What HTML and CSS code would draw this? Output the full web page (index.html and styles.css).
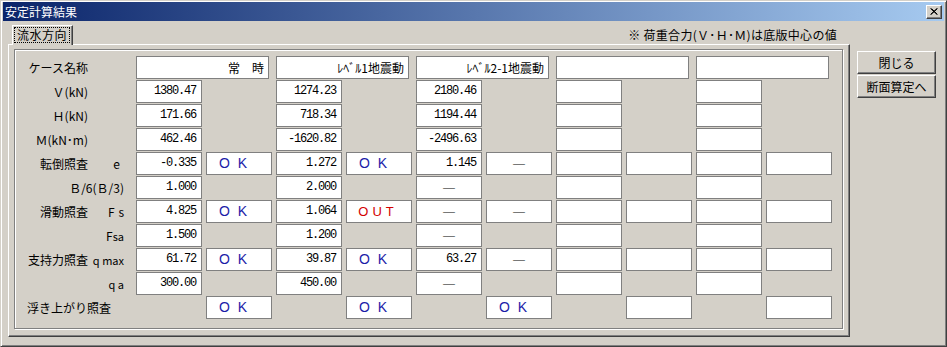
FILE: index.html
```html
<!DOCTYPE html>
<html lang="ja">
<head>
  <meta charset="UTF-8" />
  <title>安定計算結果</title>
  <link rel="stylesheet" href="styles.css">
</head>
<body>

  <div class="window">
    <!-- Title bar -->
    <div class="titlebar">
      <span class="title">安定計算結果</span>
      <span class="close">
        <svg width="8" height="7" viewBox="0 0 8 7"><path d="M0.5 0.5 L7 6.5 M1.5 0.5 L7.5 6.5 M7 0.5 L0.5 6.5 M7.5 0.5 L1 6.5" stroke="#000" stroke-width="1" fill="none"/></svg>
      </span>
    </div>

    <div class="main">
      <div class="tabs">
        <div class="strip">
          <div class="tab"><span class="focus">流水方向</span></div>
          <div class="note">※ 荷重合力(Ｖ･Ｈ･Ｍ)は底版中心の値</div>
        </div>

        <div class="page">
          <div class="group">
            <div class="grid">
              <!-- case names -->
              <div class="lb"><span class="m">ケース名称</span></div>
              <div class="c hd">常　時</div>
              <div class="c hd">ﾚﾍﾞﾙ1地震動</div>
              <div class="c hd">ﾚﾍﾞﾙ2-1地震動</div>
              <div class="c hd"></div>
              <div class="c hd"></div>

              <!-- V -->
              <div class="lb"><span class="m">Ｖ(kN)</span></div>
              <div class="c n">1380.47</div><div></div>
              <div class="c n">1274.23</div><div></div>
              <div class="c n">2180.46</div><div></div>
              <div class="c"></div><div></div>
              <div class="c"></div><div></div>

              <!-- H -->
              <div class="lb"><span class="m">Ｈ(kN)</span></div>
              <div class="c n">171.66</div><div></div>
              <div class="c n">718.34</div><div></div>
              <div class="c n">1194.44</div><div></div>
              <div class="c"></div><div></div>
              <div class="c"></div><div></div>

              <!-- M -->
              <div class="lb"><span class="m">Ｍ(kN･m)</span></div>
              <div class="c n">462.46</div><div></div>
              <div class="c n">-1620.82</div><div></div>
              <div class="c n">-2496.63</div><div></div>
              <div class="c"></div><div></div>
              <div class="c"></div><div></div>

              <!-- overturning -->
              <div class="lb"><span class="m">転倒照査</span><span class="s e">e</span></div>
              <div class="c n">-0.335</div><div class="c ok">OK</div>
              <div class="c n">1.272</div><div class="c ok">OK</div>
              <div class="c n">1.145</div><div class="c d">―</div>
              <div class="c"></div><div class="c"></div>
              <div class="c"></div><div class="c"></div>

              <div class="lb"><span class="s">Ｂ/6(Ｂ/3)</span></div>
              <div class="c n">1.000</div><div></div>
              <div class="c n">2.000</div><div></div>
              <div class="c d">―</div><div></div>
              <div class="c"></div><div></div>
              <div class="c"></div><div></div>

              <!-- sliding -->
              <div class="lb"><span class="m">滑動照査</span><span class="s wide">Fs</span></div>
              <div class="c n">4.825</div><div class="c ok">OK</div>
              <div class="c n">1.064</div><div class="c ok out">OUT</div>
              <div class="c d">―</div><div class="c d">―</div>
              <div class="c"></div><div class="c"></div>
              <div class="c"></div><div class="c"></div>

              <div class="lb"><span class="s">F<small>sa</small></span></div>
              <div class="c n">1.500</div><div></div>
              <div class="c n">1.200</div><div></div>
              <div class="c d">―</div><div></div>
              <div class="c"></div><div></div>
              <div class="c"></div><div></div>

              <!-- bearing -->
              <div class="lb"><span class="m">支持力照査</span><span class="s"><small>q max</small></span></div>
              <div class="c n">61.72</div><div class="c ok">OK</div>
              <div class="c n">39.87</div><div class="c ok">OK</div>
              <div class="c n">63.27</div><div class="c d">―</div>
              <div class="c"></div><div class="c"></div>
              <div class="c"></div><div class="c"></div>

              <div class="lb"><span class="s"><small>q a</small></span></div>
              <div class="c n">300.00</div><div></div>
              <div class="c n">450.00</div><div></div>
              <div class="c d">―</div><div></div>
              <div class="c"></div><div></div>
              <div class="c"></div><div></div>

              <!-- uplift -->
              <div class="lb float">浮き上がり照査</div>
              <div></div><div class="c ok">OK</div>
              <div></div><div class="c ok">OK</div>
              <div></div><div class="c ok">OK</div>
              <div></div><div class="c"></div>
              <div></div><div class="c"></div>
            </div>
          </div>
        </div>
      </div>

      <div class="side">
        <button>閉じる</button>
        <button>断面算定へ</button>
      </div>
    </div>
  </div>

</body>
</html>
```

FILE: styles.css
```css
* { box-sizing: border-box; }

body {
  margin: 0;
  background: #d4d0c8;
  font-family: "Noto Sans CJK JP", sans-serif;
  font-size: 12px;
  color: #000;
}

.window {
  width: 947px;
  height: 347px;
  background: #d4d0c8;
  border: 1px solid;
  border-color: #d4d0c8 #404040 #404040 #d4d0c8;
  box-shadow: inset 1px 1px #fff, inset -1px -1px #808080;
  padding: 1px 2px 2px 2px;
}

.titlebar {
  height: 19px;
  background: linear-gradient(to right, #0a246a, #a6caf0);
  color: #fff;
  display: flex;
  align-items: center;
  justify-content: space-between;
  padding: 0 2px 0 2px;
}

.title { line-height: 19px; font-size: 12px; }

.close {
  width: 16px;
  height: 14px;
  background: #d4d0c8;
  border: 1px solid;
  border-color: #fff #404040 #404040 #fff;
  box-shadow: inset -1px -1px #808080;
  display: flex;
  align-items: center;
  justify-content: center;
}

.main {
  display: flex;
  padding: 4px 0 0 5px;
}

.tabs { width: 842px; }

.strip {
  height: 19px;
  display: flex;
  align-items: flex-end;
  justify-content: space-between;
}

.tab {
  position: relative;
  z-index: 1;
  margin-left: 4px;
  margin-bottom: -1px;
  width: 61px;
  height: 20px;
  background: #d4d0c8;
  border: 1px solid;
  border-bottom: none;
  border-color: #fff #404040 transparent #fff;
  box-shadow: inset -1px 0 #808080;
  padding: 2px 3px 0 2px;
}

.focus {
  display: block;
  outline: 1px dotted #000;
  line-height: 14px;
  padding-left: 2px;
  letter-spacing: 0.5px;
}

.note {
  padding-right: 13px;
  line-height: 19px;
  letter-spacing: 0.3px;
}

.page {
  height: 293px;
  border: 1px solid;
  border-color: #fff #404040 #404040 #fff;
  box-shadow: inset -1px -1px #808080;
  padding: 4px 6px 0 5px;
}

.group {
  height: 280px;
  border: 1px solid #808080;
  box-shadow: inset 1px 1px #fff, 1px 1px #fff;
  padding-top: 6px;
}

.grid {
  display: grid;
  grid-template-columns: 117px repeat(10, 66px);
  grid-auto-rows: 23px;
  column-gap: 4px;
  row-gap: 1px;
}

.lb {
  display: flex;
  align-items: center;
  white-space: nowrap;
}

.lb .m { width: 73px; flex: none; text-align: right; }
.lb .s { flex: 1; text-align: right; padding-right: 8px; }
.lb .e { padding-right: 12px; }
.lb .wide { letter-spacing: 4px; padding-right: 4px; }
.lb small { font-size: 11px; }
.lb.float { padding-left: 12px; }

.c {
  background: #fff;
  border: 1px solid #808080;
  line-height: 21px;
  white-space: nowrap;
  overflow: hidden;
}

.hd {
  grid-column: span 2;
  width: 133px;
  text-align: right;
  padding-right: 4px;
}

.n {
  text-align: right;
  padding-right: 5px;
  font-family: "Liberation Mono", monospace;
  font-size: 12px;
  letter-spacing: -1.2px;
}

.ok {
  text-align: center;
  font-family: "Liberation Sans", sans-serif;
  font-size: 14px;
  letter-spacing: 8px;
  padding-right: 4px;
  color: #1c1ca8;
}

.out { color: #d40000; font-size: 13px; letter-spacing: 4px; padding-right: 2px; }

.d { text-align: center; font-size: 14px; }

.side {
  margin-left: 7px;
  padding-top: 26px;
  display: flex;
  flex-direction: column;
  gap: 1px;
}

button {
  width: 79px;
  height: 23px;
  padding: 0;
  background: #d4d0c8;
  border: 1px solid;
  border-color: #fff #404040 #404040 #fff;
  box-shadow: inset -1px -1px #808080;
  font-family: "Noto Sans CJK JP", sans-serif;
  font-size: 12px;
  color: #000;
}
```
